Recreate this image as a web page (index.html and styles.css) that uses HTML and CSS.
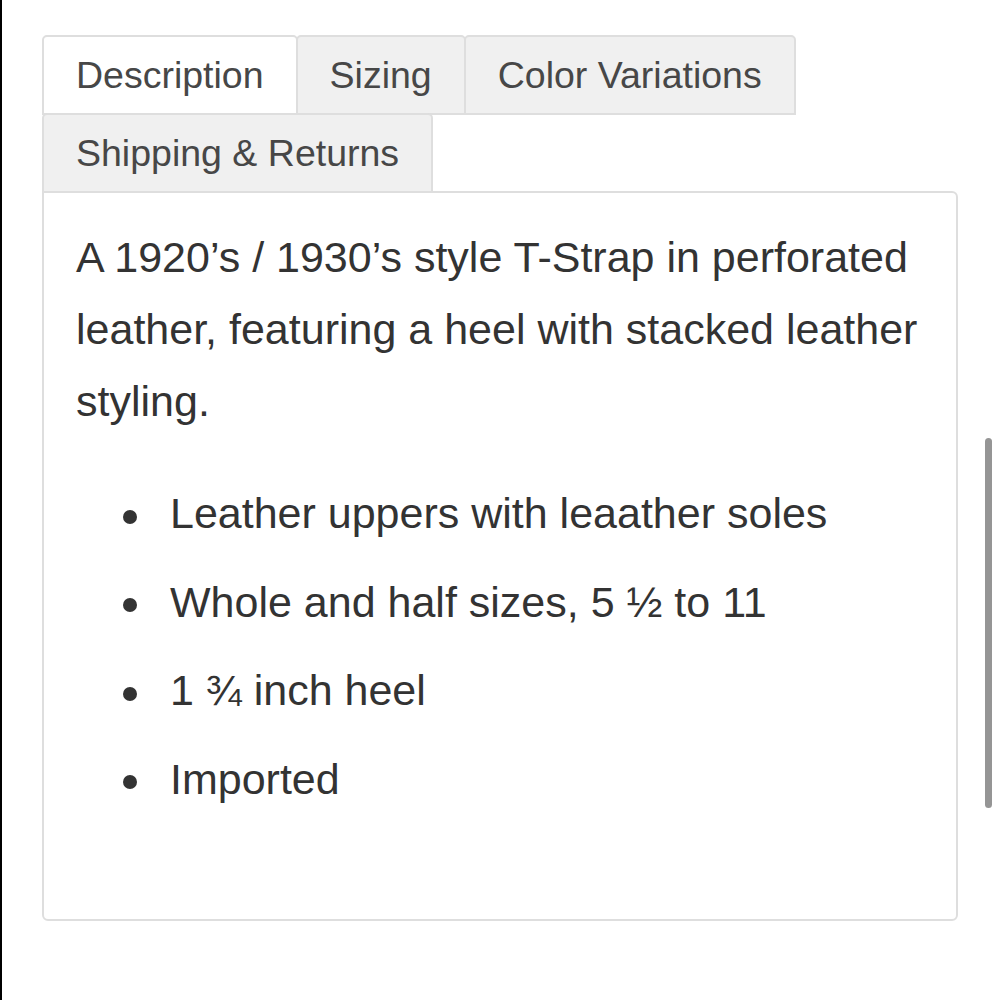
FILE: index.html
```html
<!DOCTYPE html>
<html>
<head>
<meta charset="utf-8">
<title>T-Strap Details</title>
<link rel="stylesheet" href="styles.css">
</head>
<body>

<div class="product-tabs">
  <ul class="tab-list">
    <li class="tab active">Description</li>
    <li class="tab">Sizing</li>
    <li class="tab">Color Variations</li>
    <li class="tab">Shipping &amp; Returns</li>
  </ul>

  <div class="tab-panel">
    <p>A 1920’s / 1930’s style T-Strap in perforated leather, featuring a heel with stacked leather styling.</p>
    <ul class="features">
      <li>Leather uppers with leaather soles</li>
      <li>Whole and half sizes, 5 ½ to 11</li>
      <li>1 ¾ inch heel</li>
      <li>Imported</li>
    </ul>
  </div>
</div>

<div class="scroll-thumb"></div>

</body>
</html>
```

FILE: styles.css
```css
html, body {
  height: 100%;
}
body {
  margin: 0;
  background-color: #fff;
  border-left: 2px solid #000;
  box-sizing: border-box;
  font-family: "Liberation Sans", Arial, sans-serif;
  color: #333;
}

.product-tabs {
  width: 916px;
  padding: 35px 0 0 40px;
}

.tab-list {
  display: flex;
  flex-wrap: wrap;
  margin: 0;
  padding: 0;
  list-style: none;
}
.tab {
  height: 76px;
  line-height: 76px;
  padding: 0 32px;
  font-size: 37.5px;
  color: #474747;
  background: #f0f0f0;
  border: 2px solid #dedede;
  border-radius: 5px 5px 0 0;
  margin: 0 -2px -2px 0;
}
.tab.active {
  background: #fff;
}

.tab-panel {
  box-sizing: border-box;
  height: 730px;
  padding: 28px 18px 0 32px;
  border: 2px solid #dedede;
  border-radius: 0 6px 6px 6px;
  font-size: 43px;
  line-height: 72px;
}
.tab-panel p {
  margin: 0 0 40px;
}

.features {
  margin: 0;
  padding-left: 94px;
  list-style: none;
}
.features li {
  margin-bottom: 16.5px;
}
.features li::before {
  content: "";
  display: inline-block;
  width: 14px;
  height: 14px;
  border-radius: 50%;
  background: #333;
  margin: 0 33px 0 -47px;
  vertical-align: middle;
}

/* overlay scroll indicator */
.scroll-thumb {
  position: fixed;
  left: 985px;
  top: 438px;
  width: 7px;
  height: 370px;
  border-radius: 4px;
  background: #959595;
}
```
